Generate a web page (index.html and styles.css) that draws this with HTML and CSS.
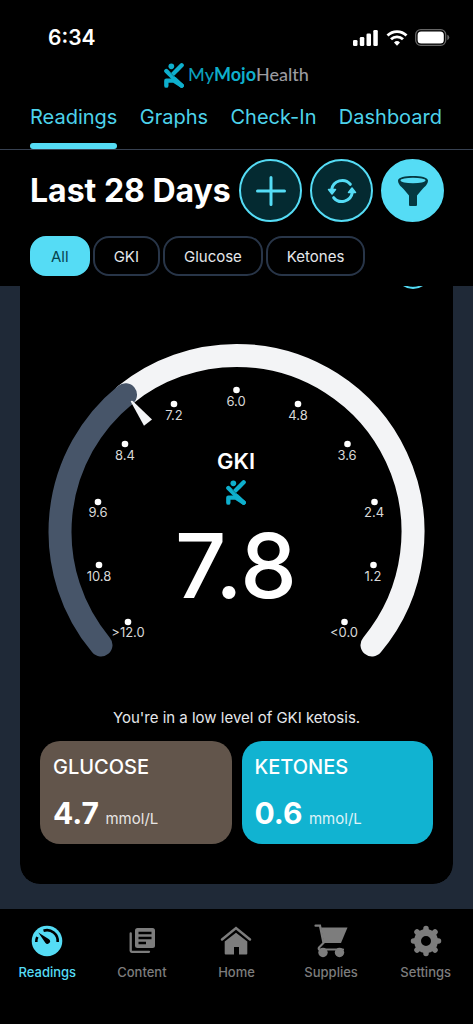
FILE: index.html
```html
<!DOCTYPE html>
<html lang="en">
<head>
<meta charset="utf-8">
<meta name="viewport" content="width=device-width, initial-scale=1">
<title>MyMojoHealth</title>
<link rel="stylesheet" href="styles.css">
</head>
<body>
<svg class="defs" aria-hidden="true">
  <symbol id="figure" viewBox="0 0 60 75">
    <g fill="none" stroke="currentColor" stroke-width="13" stroke-linecap="round" stroke-linejoin="round">
      <path d="M53 7 28 32"/>
      <path d="M7 24 26 43"/>
      <path d="M7 68V53H30L53 68"/>
      <path d="M32 48 53 68"/>
    </g>
    <path d="M17 27 30 40 42 28" fill="none" stroke="#000" stroke-opacity=".6" stroke-width="1.500"/>
    <circle cx="22" cy="10" r="8.500" fill="currentColor"/>
  </symbol>
</svg>
<div class="app">
  <header class="top">
    <div class="status">
      <time>6:34</time>
      <div class="status-icons">
        <svg width="26" height="16" viewBox="0 0 26 16" fill="#fff"><rect x="0" y="10" width="4.500" height="6" rx="1.300"/><rect x="6.800" y="7" width="4.500" height="9" rx="1.300"/><rect x="13.500" y="3.500" width="4.500" height="12.500" rx="1.300"/><rect x="20.300" y="0" width="4.500" height="16" rx="1.300"/></svg>
        <svg width="22" height="16" viewBox="0 0 22 16" fill="none" stroke="#fff" stroke-width="2.800"><path d="M1.500 5.600a13.500 13.500 0 0 1 19 0"/><path d="M5 9.300a8.500 8.500 0 0 1 12 0"/><path d="M11 15.700 8 12.500a4.300 4.300 0 0 1 6 0z" fill="#fff" stroke="none"/></svg>
        <svg width="35" height="17" viewBox="0 0 35 17"><rect x=".7" y=".7" width="30" height="15.600" rx="5" fill="none" stroke="#666" stroke-width="1.300"/><rect x="2.600" y="2.600" width="26.200" height="11.800" rx="3.500" fill="#fff"/><path d="M32.300 5.800q2 .8 2 2.700t-2 2.700z" fill="#666"/></svg>
      </div>
    </div>
    <div class="brand">
      <svg class="brand-mark"><use href="#figure"/></svg>
      <span class="brand-name">My<b>Mojo</b><i>Health</i></span>
    </div>
    <nav class="tabs" aria-label="Views">
      <a class="tab current" href="#readings">Readings</a>
      <a class="tab" href="#graphs">Graphs</a>
      <a class="tab" href="#check-in">Check-In</a>
      <a class="tab" href="#dashboard">Dashboard</a>
    </nav>
    <div class="title-row">
      <h1>Last 28 Days</h1>
      <div class="actions">
        <button class="round" aria-label="Add reading"><svg viewBox="0 0 32 32" fill="none" stroke="currentColor" stroke-width="3" stroke-linecap="round"><path d="M16 2.500v27M2.500 16h27"/></svg></button>
        <button class="round" aria-label="Refresh"><svg viewBox="0 0 32 32" fill="none" stroke="currentColor" stroke-width="3" stroke-linecap="round"><path d="M5.700 14.500A10.600 10.600 0 0 1 24.300 9.300"/><path d="M26.300 17.500A10.600 10.600 0 0 1 7.700 22.700"/><path d="M2.500 14.500h7l-3.500 4.500z" fill="currentColor" stroke-width="1.500" stroke-linejoin="round"/><path d="M22.500 17.500h7L26 13z" fill="currentColor" stroke-width="1.500" stroke-linejoin="round"/></svg></button>
        <button class="round filled" aria-label="Filter"><svg viewBox="0 0 32 32"><path d="M1 5.500C1-.4 31-.4 31 5.500 31 9 28 11.500 25.500 14L20 20.500V30a1 1 0 0 1-1 1h-6a1 1 0 0 1-1-1v-9.500L6.500 14C4 11.500 1 9 1 5.500z" fill="currentColor"/><ellipse cx="16" cy="5.500" rx="12.500" ry="2.700" fill="#55dcf5"/></svg></button>
      </div>
    </div>
    <div class="chips">
      <button class="chip selected">All</button>
      <button class="chip">GKI</button>
      <button class="chip">Glucose</button>
      <button class="chip">Ketones</button>
    </div>
  </header>

  <main class="content">
    <section class="card">
      <div class="card-tools"><button class="info" aria-label="About GKI"></button></div>
      <svg class="gauge" viewBox="0 0 393 314" role="img" aria-label="GKI 7.8">
        <g fill="none" stroke-width="23" stroke-linecap="round">
          <path d="M85.500 51.700A176.500 176.500 0 0 1 196.500 12.400A176.500 176.500 0 0 1 332 302" stroke="#f3f4f6"/>
          <path d="M61 302A176.500 176.500 0 0 1 85.500 51.700" stroke="#475569"/>
        </g>
        <path d="M90.700 58.500q.6-1.400 2-.5L112 76.500l-8 6.300z" fill="#f3f4f6"/>
        <g fill="#fff">
          <circle cx="88" cy="279" r="3.300"/><circle cx="59" cy="222" r="3.300"/><circle cx="58" cy="159" r="3.300"/><circle cx="85" cy="101" r="3.300"/><circle cx="134" cy="61" r="3.300"/><circle cx="196.500" cy="47" r="3.300"/><circle cx="258" cy="61" r="3.300"/><circle cx="307.500" cy="101" r="3.300"/><circle cx="334.500" cy="159" r="3.300"/><circle cx="333.500" cy="222" r="3.300"/><circle cx="304.500" cy="279" r="3.300"/>
        </g>
        <g class="ticks">
          <text x="88" y="294">&gt;12.0</text><text x="59" y="238">10.8</text><text x="58" y="174">9.6</text><text x="85" y="117">8.4</text><text x="134" y="77">7.2</text><text x="196" y="63">6.0</text><text x="258" y="77">4.8</text><text x="307" y="117">3.6</text><text x="334" y="174">2.4</text><text x="333" y="238">1.2</text><text x="304" y="294">&lt;0.0</text>
        </g>
        <text class="gauge-name" x="196" y="126">GKI</text>
        <use href="#figure" x="186" y="137" width="20" height="25" color="#0eafcd"/>
        <text class="gauge-value" x="196" y="255">7.8</text>
      </svg>
      <p class="message">You're in a low level of GKI ketosis.</p>
      <div class="stats">
        <article class="stat glucose"><h2>GLUCOSE</h2><p><strong>4.7</strong> <span>mmol/L</span></p></article>
        <article class="stat ketones"><h2>KETONES</h2><p><strong>0.6</strong> <span>mmol/L</span></p></article>
      </div>
    </section>
  </main>

  <nav class="bottom" aria-label="Main">
    <a class="item active" href="#readings">
      <svg viewBox="0 0 34 34"><circle cx="17" cy="17" r="15.300" fill="currentColor"/><g fill="none" stroke="#000" stroke-width="2.600"><path d="M13.500 6.800A10.800 10.800 0 0 1 27.700 18"/><path d="M6.300 18a10.500 10.500 0 0 1 1-5"/></g><path d="M8.300 8.500 19 15.200a2.600 2.600 0 1 1-3.700 3.600z"/></svg>
      <span>Readings</span></a>
    <a class="item" href="#content">
      <svg viewBox="0 0 34 34"><rect x="10" y="4" width="20" height="20" rx="2.500" fill="currentColor"/><path d="M5.700 9.500v17.300q0 1 1 1H24" fill="none" stroke="currentColor" stroke-width="2.300" stroke-linecap="round"/><path d="M13.500 9h13M13.500 14h13M13.500 19h7.500" stroke="#000" stroke-width="2.300"/></svg>
      <span>Content</span></a>
    <a class="item" href="#home">
      <svg viewBox="0 0 34 34"><path d="M3 15.500 17 4l14 11.500" fill="none" stroke="currentColor" stroke-width="2.500" stroke-linecap="round"/><path d="M5.700 17.500 17 8.700l11.300 8.800v12a1 1 0 0 1-1 1H20v-7.500h-5v7.500H6.700a1 1 0 0 1-1-1z" fill="currentColor"/></svg>
      <span>Home</span></a>
    <a class="item" href="#supplies">
      <svg viewBox="0 0 34 34"><path d="M7 3.500h26.500L27 19H10z" fill="currentColor"/><path d="M1.500 1.700H6L9.500 19 5 23.500q-1 2.500 1.500 2H29" fill="none" stroke="currentColor" stroke-width="2.200" stroke-linecap="round"/><circle cx="9" cy="28.500" r="4.700" fill="currentColor"/><circle cx="25.500" cy="28.500" r="4.700" fill="currentColor"/></svg>
      <span>Supplies</span></a>
    <a class="item" href="#settings">
      <svg viewBox="0 0 34 34"><circle cx="17" cy="17" r="8.500" fill="none" stroke="currentColor" stroke-width="7"/><g stroke="currentColor" stroke-width="5.500" stroke-linecap="round"><path d="M17 4.500v3M17 26.500v3M4.500 17h3M26.500 17h3M8 8l2 2M24 24l2 2M8 26l2-2M24 10l2-2"/></g></svg>
      <span>Settings</span></a>
  </nav>
</div>
</body>
</html>
```
FILE: styles.css
```css
* { box-sizing: border-box; }
body { margin: 0; background: #000; color: #fff; font-family: Inter, "Liberation Sans", sans-serif; }
h1, h2, p { margin: 0; }
a { color: inherit; text-decoration: none; }
button { font: inherit; cursor: pointer; }
svg { display: block; }
.defs { position: absolute; width: 0; height: 0; }
.app { min-height: 100vh; display: flex; flex-direction: column; }

.top { background: #000; padding-bottom: 10px; }
.status { display: flex; justify-content: space-between; align-items: center; padding: 25px 23px 0 48px; }
.status time { font-size: 21px; line-height: 25px; font-weight: 600; }
.status-icons { display: flex; align-items: center; gap: 7px; }
.brand { display: flex; justify-content: center; align-items: flex-start; gap: 4px; padding-top: 13px; height: 50px; }
.brand-mark { width: 20px; height: 25px; color: #0eafcd; }
.brand-name { font-family: Lato, sans-serif; font-size: 18px; line-height: 22px; font-weight: 500; color: #0b9fbb; }
.brand-name b { font-weight: 700; color: #0eafcd; }
.brand-name i { font-style: normal; color: #9b9ba0; }

.tabs { display: flex; justify-content: space-between; padding: 0 31px 0 30px; border-bottom: 1px solid #374151; }
.tab { position: relative; color: #4dd3eb; font-size: 20px; line-height: 34px; padding-bottom: 15px; }
.tab.current::after { content: ""; position: absolute; left: 0; right: 0; bottom: 0; height: 6px; border-radius: 3px; background: #55dcf5; }

.title-row { display: flex; justify-content: space-between; align-items: center; padding: 9px 29px 0 30px; }
h1 { font-size: 32px; line-height: 40px; font-weight: 700; white-space: nowrap; }
.actions { display: flex; gap: 8px; }
.round { width: 63px; height: 63px; padding: 0; display: grid; place-items: center; border: 2px solid #55dcf5; border-radius: 50%; background: #042a31; color: #55dcf5; }
.round svg { width: 32px; height: 32px; }
.round.filled { background: #55dcf5; color: #053841; }

.chips { display: flex; gap: 3px; padding: 14px 30px 0; }
.chip { height: 40px; padding: 0 19px; border: 2px solid #283548; border-radius: 16px; background: #000; color: #e5e7eb; font-size: 15px; }
.chip.selected { background: #55dcf5; border-color: #55dcf5; color: #06434d; }

.content { flex: 1; overflow: hidden; background: #1f2937; padding: 0 20px 25px; }
.card { margin-top: -48px; padding: 15px 20px 40px; border-radius: 20px; background: #000; clip-path: inset(48px 0 0 0 round 0 0 20px 20px); }
.card-tools { display: flex; justify-content: flex-end; padding-right: 2px; }
.info { width: 36px; height: 36px; border: 2px solid #55dcf5; border-radius: 50%; background: #042a31; }
.gauge { width: 100%; margin-top: 54px; }
.gauge text { text-anchor: middle; fill: #fff; }
.gauge .ticks text { font-size: 13px; fill: #d8d8d8; }
.gauge .gauge-name { font-size: 22px; font-weight: 600; }
.gauge .gauge-value { font-size: 90px; font-weight: 500; }
.message { margin-top: 51px; text-align: center; font-size: 15px; line-height: 20px; color: #e5e7eb; }
.stats { display: grid; grid-template-columns: 1fr 1fr; gap: 10px; margin-top: 13px; }
.stat { border-radius: 20px; padding: 14px 13px 7px; }
.stat h2 { font-size: 20px; line-height: 25px; font-weight: 500; }
.stat p { margin-top: 15px; line-height: 36px; }
.stat strong { font-size: 30px; font-weight: 700; }
.stat span { font-size: 15px; opacity: .85; margin-left: 2px; }
.glucose { background: #62554b; }
.ketones { background: #11b3d1; }

.bottom { display: grid; grid-template-columns: repeat(5, 1fr); background: #000; padding: 15px 0 43px; }
.item { display: flex; flex-direction: column; align-items: center; gap: 5px; color: #7d7d7d; font-size: 13px; line-height: 18px; font-weight: 500; }
.item svg { width: 34px; height: 34px; }
.item.active { color: #55dcf5; }
```
